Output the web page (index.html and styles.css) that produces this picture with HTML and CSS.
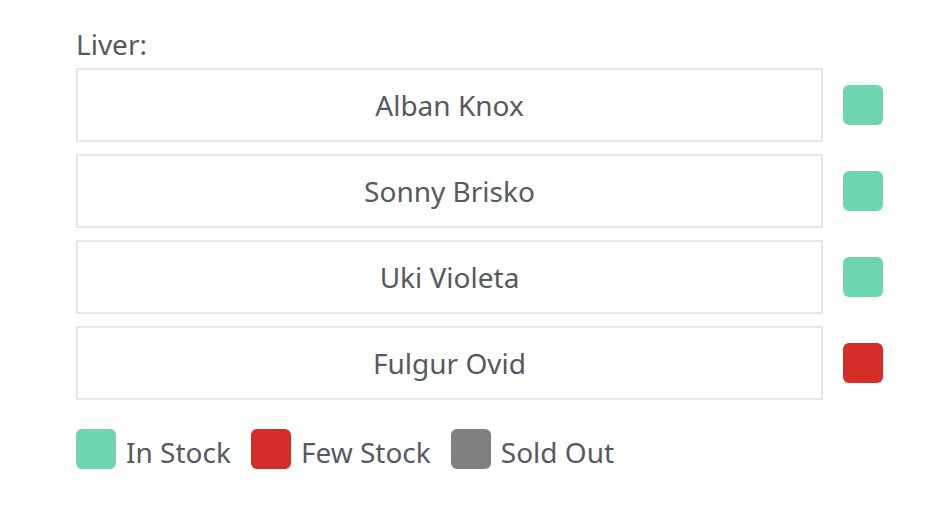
FILE: index.html
```html
<!DOCTYPE html>
<html>
<head>
<meta charset="utf-8">
<title>Liver stock</title>
<link rel="stylesheet" href="styles.css">
</head>
<body>
	<div class="panel">
		<div class="label">Liver:</div>
		<ul class="livers">
			<li><span class="name">Alban Knox</span><span class="dot in"></span></li>
			<li><span class="name">Sonny Brisko</span><span class="dot in"></span></li>
			<li><span class="name">Uki Violeta</span><span class="dot in"></span></li>
			<li><span class="name">Fulgur Ovid</span><span class="dot few"></span></li>
		</ul>
		<ul class="legend">
			<li><span class="dot in"></span><span class="txt">In Stock</span></li>
			<li><span class="dot few"></span><span class="txt">Few Stock</span></li>
			<li><span class="dot out"></span><span class="txt">Sold Out</span></li>
		</ul>
	</div>
</body>
</html>
```

FILE: styles.css
```css
body {
	margin: 0;
	background: #fff;
	color: #555a60;
	font-family: "Noto Sans", "Open Sans", sans-serif;
}
.panel {
	padding: 26px 0 0 76px;
	width: 807px;
}
.label {
	font-size: 28px;
	line-height: 36px;
	margin-bottom: 6px;
}
ul {
	list-style: none;
	margin: 0;
	padding: 0;
}
.livers li {
	display: flex;
	align-items: center;
	gap: 20px;
	margin-bottom: 12px;
}
.livers .name {
	flex: 1;
	height: 70px;
	border: 2px solid #e6e6e6;
	display: flex;
	align-items: center;
	justify-content: center;
	font-size: 28px;
}
.dot {
	display: inline-block;
	width: 40px;
	height: 40px;
	border-radius: 6px;
	flex: none;
}
.dot.in { background: #6dd6ae; }
.dot.few { background: #d42d27; }
.dot.out { background: #808080; }
.legend {
	display: flex;
	gap: 20px;
	margin-top: 26px;
}
.legend li {
	display: flex;
	align-items: center;
	gap: 10px;
	font-size: 28px;
	line-height: 40px;
}
.legend .txt {
	padding-top: 6px;
}
```
